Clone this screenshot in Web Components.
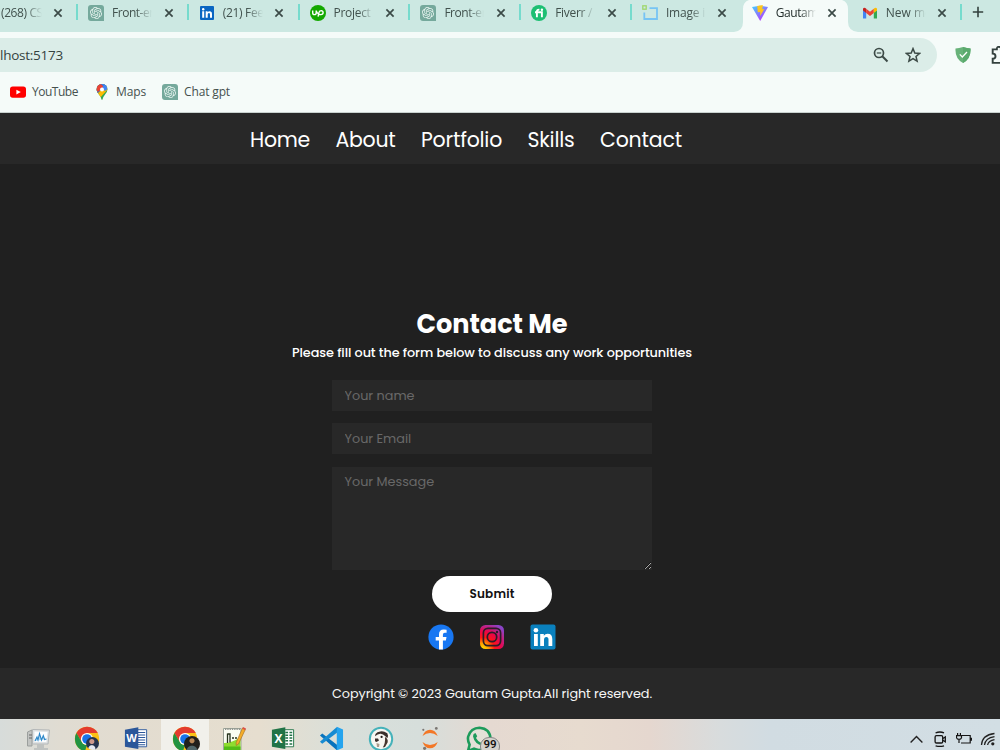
<!DOCTYPE html>
<html lang="en">
<head>
<meta charset="utf-8">
<title>Gautam Gupta</title>
<style>
    html, body {
        margin: 0;
        height: 100%;
        overflow: hidden;
        background: #202020;
    }
</style>
</head>
<body>
<app-desktop></app-desktop>

<script>
const chromeFont = '"Segoe UI", "Open Sans", "Noto Sans", sans-serif';
const pageFont = 'Poppins, Inter, "Open Sans", sans-serif';

const gptKnot = '<path transform="translate(2 2) scale(.5)" fill="#e9f5f1" d="M22.2819 9.8211a5.9847 5.9847 0 0 0-.5157-4.9108 6.0462 6.0462 0 0 0-6.5098-2.9A6.0651 6.0651 0 0 0 4.9807 4.1818a5.9847 5.9847 0 0 0-3.9977 2.9 6.0462 6.0462 0 0 0 .7427 7.0966 5.98 5.98 0 0 0 .511 4.9107 6.051 6.051 0 0 0 6.5146 2.9001A5.9847 5.9847 0 0 0 13.2599 24a6.0557 6.0557 0 0 0 5.7718-4.2058 5.9894 5.9894 0 0 0 3.9977-2.9001 6.0557 6.0557 0 0 0-.7475-7.0729zm-9.022 12.6081a4.4755 4.4755 0 0 1-2.8764-1.0408l.1419-.0804 4.7783-2.7582a.7948.7948 0 0 0 .3927-.6813v-6.7369l2.02 1.1686a.071.071 0 0 1 .038.052v5.5826a4.504 4.504 0 0 1-4.4945 4.4944zm-9.6607-4.1254a4.4708 4.4708 0 0 1-.5346-3.0137l.142.0852 4.783 2.7582a.7712.7712 0 0 0 .7806 0l5.8428-3.3685v2.3324a.0804.0804 0 0 1-.0332.0615L9.74 19.9502a4.4992 4.4992 0 0 1-6.1408-1.6464zM2.3408 7.8956a4.485 4.485 0 0 1 2.3655-1.9728V11.6a.7664.7664 0 0 0 .3879.6765l5.8144 3.3543-2.0201 1.1685a.0757.0757 0 0 1-.071 0l-4.8303-2.7865A4.504 4.504 0 0 1 2.3408 7.872zm16.5963 3.8558L13.1038 8.364 15.1192 7.2a.0757.0757 0 0 1 .071 0l4.8303 2.7913a4.4944 4.4944 0 0 1-.6765 8.1042v-5.6772a.79.79 0 0 0-.407-.667zm2.0107-3.0231l-.142-.0852-4.7735-2.7818a.7759.7759 0 0 0-.7854 0L9.409 9.2297V6.8974a.0662.0662 0 0 1 .0284-.0615l4.8303-2.7866a4.4992 4.4992 0 0 1 6.6802 4.66zM8.3065 12.863l-2.02-1.1638a.0804.0804 0 0 1-.038-.0567V6.0742a4.4992 4.4992 0 0 1 7.3757-3.4537l-.142.0805L8.704 5.459a.7948.7948 0 0 0-.3927.6813zm1.0976-2.3654l2.602-1.4998 2.6069 1.4998v2.9994l-2.5974 1.4997-2.6067-1.4997Z"/>';

// name: [viewBox, markup]
const icons = {
    close: ['0 0 10 10', '<path d="M1.4 1.4L8.6 8.6M8.6 1.4L1.4 8.6" stroke="#3b4a47" stroke-width="1.7"/>'],
    plus: ['0 0 12 12', '<path d="M6 .8V11.2M.8 6H11.2" stroke="#33413e" stroke-width="1.6"/>'],
    gpt: ['0 0 16 16', `<path d="M3 0H13Q16 0 16 3V16H3Q0 16 0 13V3Q0 0 3 0Z" fill="#75a99c"/>${gptKnot}`],
    linkedin: ['0 0 16 16', '<rect x="1" y="1" width="14" height="14" rx="1" fill="#0a66c2"/><path fill="#fff" d="M3.2 6.3h2v6.4h-2zM6.7 6.3h1.9v.9q.7-1 2-1 2.4 0 2.4 2.8v3.7h-2V9.4q0-1.4-1.1-1.4-1.2 0-1.2 1.5v3.2h-2z"/><circle cx="4.2" cy="4.3" r="1.2" fill="#fff"/>'],
    upwork: ['0 0 16 16', '<circle cx="8" cy="8" r="8" fill="#14a800"/><path d="M2.7 5.6V7.7Q2.7 9.6 4.4 9.6Q6.2 9.6 6.2 7.7V5.6Q7.4 9.6 10.9 9.6Q13.1 9.5 13.1 7.6Q13.1 5.7 11.1 5.6Q9.2 5.7 8.8 8L8.1 11.6" fill="none" stroke="#fff" stroke-width="1.4"/>'],
    fiverr: ['0 0 16 16', '<circle cx="8" cy="8" r="8" fill="#1dbf73"/><path d="M4 7.3H10.9V12.2M5.9 12.2V6.4Q5.9 4.5 8.4 4.7" fill="none" stroke="#fff" stroke-width="1.9"/><circle cx="10.9" cy="4.7" r="1.2" fill="#fff"/>'],
    crop: ['0 0 16 16', '<path d="M7.5 3.2H15V14H2.3V7.5" fill="none" stroke="#77c4f4" stroke-width="1.8"/><rect x=".8" y=".8" width="3.4" height="3.4" fill="none" stroke="#9ed66c" stroke-width="1.3"/>'],
    vite: ['0 0 16 16', '<defs><linearGradient id="va" x1="0" y1="0" x2=".7" y2="1"><stop stop-color="#41d1ff"/><stop offset="1" stop-color="#bd34fe"/></linearGradient></defs><path d="M0 2L8 .8L16 2L8.2 16Z" fill="url(#va)"/><path d="M5.2 1L10.8 0L10.3 4.2L12.4 4L8 11L8.3 7L5.8 7.3Z" fill="#ffc61c"/>'],
    gmail: ['0 0 16 16', '<path d="M1 13.6V5L4.2 7.3V13.6Z" fill="#4285f4"/><path d="M15 13.6V5L11.8 7.3V13.6Z" fill="#34a853"/><path d="M4.2 3.8L8 6.8L11.8 3.8V8L8 10.9L4.2 8Z" fill="#ea4335"/><path d="M1 3.8Q1.8 2 3.3 3L4.2 3.8V8L1 5.6Z" fill="#c5221f"/><path d="M15 3.8Q14.2 2 12.7 3L11.8 3.8V8L15 5.6Z" fill="#fbbc04"/>'],
    zoomout: ['0 0 16 16', '<g fill="none" stroke="#3c4a46"><circle cx="6" cy="6" r="4.5" stroke-width="1.7"/><path d="M9.3 9.3L14.5 14.5" stroke-width="2"/><path d="M3.8 6H8.2" stroke-width="1.2"/></g>'],
    star: ['0 0 16 16', '<path d="M8 1.6L9.8 6L14.6 6.4L11 9.5L12.1 14.2L8 11.7L3.9 14.2L5 9.5L1.4 6.4L6.2 6Z" fill="none" stroke="#3c4a46" stroke-width="1.5"/>'],
    shield: ['0 0 16 16', '<path d="M8 0Q12 1.2 15.5 1.4Q16.2 11.5 8 16Q-.2 11.5 .5 1.4Q4 1.2 8 0Z" fill="#67b279"/><path d="M8 0Q12 1.2 15.5 1.4Q16.2 11.5 8 16Z" fill="#5aaa6d"/><path d="M4.8 7.4L7.3 10L12 5" fill="none" stroke="#fff" stroke-width="1.3"/>'],
    puzzle: ['0 0 16 16', '<path d="M1.5 3H5.2Q5 .8 7 .8Q9 .8 8.8 3H13V7Q15.4 7 15.4 9Q15.4 11 13 11V15H1.5V11.3Q4 11.2 4 9Q4 6.8 1.5 6.8Z" fill="none" stroke="#33413e" stroke-width="1.7"/>'],
    youtube: ['0 0 16 16', '<rect y="2.4" width="16" height="11.4" rx="2.7" fill="#f00"/><path d="M6.4 5.7L10.8 8.1L6.4 10.5Z" fill="#fff"/>'],
    maps: ['0 0 16 16', '<defs><clipPath id="pin"><path d="M8 0Q13.4 .3 13.4 5.7Q13.4 8.4 10.7 11Q9 12.9 8.6 15.2Q8 16.6 7.4 15.2Q7 12.9 5.3 11Q2.6 8.4 2.6 5.7Q2.8 .3 8 0Z"/></clipPath></defs><g clip-path="url(#pin)"><path d="M0 0H16V16H0Z" fill="#34a853"/><path d="M0 0H16V3L4 16L0 9Z" fill="#fbbc04"/><path d="M0 0H16L9 4L3 10L0 8Z" fill="#1a73e8"/><path d="M0 0H7L10 3L4 8L0 4Z" fill="#ea4335"/><path d="M7.5 0L16 0V3.5L11 7L8 4L9.7 1.7Z" fill="#4285f4"/></g><circle cx="8" cy="5.6" r="2" fill="#fff"/>'],
    facebook: ['0 0 26 26', '<circle cx="13" cy="13" r="12.6" fill="#1877f2"/><path d="M11 25.5V16.5H7.7V13H11V10.2Q11 5.4 15.8 5.4Q17.3 5.4 18.6 5.7V8.8H16.8Q14.9 8.8 14.9 10.7V13H18.5L17.9 16.5H14.9V25.5Z" fill="#fff"/>'],
    instagram: ['0 0 26 26', '<defs><radialGradient id="ig" cx=".12" cy="1" r="1.15"><stop stop-color="#ffe000"/><stop offset=".2" stop-color="#ffa000"/><stop offset=".42" stop-color="#ff1515"/><stop offset=".66" stop-color="#e8054c"/><stop offset="1" stop-color="#8b44c8"/></radialGradient></defs><rect x="1" y="1" width="24" height="24" rx="5.5" fill="url(#ig)"/><g fill="none" stroke="#2b1d28" stroke-width="1.7"><rect x="4.4" y="4.4" width="17.2" height="17.2" rx="4.5"/><circle cx="13" cy="13" r="4.7"/></g><circle cx="18" cy="8" r="1.2" fill="#2b1d28"/>'],
    linkedinBig: ['0 0 26 26', '<rect x=".5" y=".5" width="25" height="25" rx="2" fill="#0a80bd"/><path fill="#fff" d="M4 10h3.8v12H4zM10.2 10h3.6v1.7q1.3-2 3.8-2 4.7 0 4.7 5.3v7h-3.8v-6.2q0-2.8-2.1-2.8-2.4 0-2.4 3v6h-3.8z"/><circle cx="5.9" cy="6.2" r="2.3" fill="#fff"/>'],
    monitor: ['0 0 26 26', '<path d="M2.5 6L7 4V20H2.5Z" fill="#c2c4c2" stroke="#9b9f9d"/><path d="M4 9H7M4 12H7" stroke="#666"/><path d="M7.5 3.5L24.5 4L23 18H7.5Z" fill="#dfe2e3" stroke="#b2b6b7"/><path d="M9.5 5.5L22.5 6L21.3 16H9.5Z" fill="#fbfdff"/><path d="M10 15L12 11L13 14L14.5 7.5L16.5 14L18.3 9.5L19.6 13.5L21.5 13" fill="#b9dcf2" stroke="#2b86c8" stroke-width="1.1"/><path d="M12 18H19V22H23V24H9V22H12Z" fill="#bfc2c0"/>'],
    chrome: ['0 0 26 26', '<circle cx="13" cy="13" r="12.2" fill="#fbc116"/><path d="M13 13L7.7 16L2.4 7Q6 1 13 .8Q20.5 1 23.8 7H13Z" fill="#e33b2e"/><path d="M2.4 7L7.8 16Q9.6 19 13 19L11 25.1Q4 24 1.5 17Q.1 11 2.4 7Z" fill="#229342"/><circle cx="13" cy="13" r="6.1" fill="#fff"/><circle cx="13" cy="13" r="4.8" fill="#1a73e8"/>'],
    word: ['0 0 26 26', '<path d="M13 4H24.5V22.5H13Z" fill="#fff" stroke="#2b579a"/><path d="M15 7H23M15 9.7H23M15 12.4H23M15 15.1H23M15 17.8H23M15 20.3H23" stroke="#2b579a" stroke-width="1.2"/><path d="M1 4L15.5 1.4V25L1 22.5Z" fill="#2b579a"/><text x="8.2" y="17.6" text-anchor="middle" font-size="12" font-weight="700" font-family="Open Sans, sans-serif" fill="#fff">W</text>'],
    notes: ['0 0 26 26', '<path d="M2.5 2.5H20V26H2.5Z" fill="#fafdf2" stroke="#9da49a"/><path d="M3 17Q11 17 19.5 11V26H3Z" fill="#8fdc2f"/><path d="M3 20.5H19.5V26H3Z" fill="#53bd18"/><path d="M4 3.3H20" stroke="#777" stroke-dasharray="1.3 1"/><path d="M6.5 7.5V17M6.5 8H9V16.5M11 12H13M14 12H16" fill="none" stroke="#26331c" stroke-width="1.3"/><path d="M21.5 2L24.3 3.5L17.5 18L15.2 19.5L15.2 16.5Z" fill="#f5ad28" stroke="#9c6a26" stroke-width=".6"/><path d="M22 1L25 2.6L24.3 4.3L21.3 2.7Z" fill="#db5148"/>'],
    excel: ['0 0 26 26', '<path d="M13 4H24.5V22.5H13Z" fill="#fff" stroke="#217346"/><path d="M15.5 7H18.5M20 7H23M15.5 10H18.5M20 10H23M15.5 13H18.5M20 13H23M15.5 16H18.5M20 16H23M15.5 19.5H18.5M20 19.5H23" stroke="#217346" stroke-width="1.8"/><path d="M1 4L15.5 1.4V25L1 22.5Z" fill="#217346"/><text x="8" y="18" text-anchor="middle" font-size="13" font-weight="700" font-family="Open Sans, sans-serif" fill="#fff">X</text>'],
    vscode: ['0 0 26 26', '<path d="M1 9.8L3.4 7.8L19 19.7V25.5Q18.4 25 17.7 24.5L1 9.8Z" fill="#0873bd"/><path d="M1 16.4L17.7 1.7L19 1V6.8L3.4 18.5L1 16.4Z" fill="#168bd2"/><path d="M18.5 .8L25 3.7V22.5L18.5 25.4Z" fill="#25a4ee"/>'],
    beaver: ['0 0 26 26', '<circle cx="13" cy="13" r="11.2" fill="#f7f6f1" stroke="#45b2ba" stroke-width="2"/><path d="M7.5 8Q9 5.5 12.3 5.5Q15.5 4.8 19.3 7.2Q20.6 9.2 19.3 12.2L17.4 10.2Q15 7.6 12.4 7.7Q9.8 7.6 7 10.2Z" fill="#3a2f2b"/><path d="M17 11Q20.5 13 19.6 16.5L17 21L14.8 21.6Q17.6 17 17 11Z" fill="#44352e"/><path d="M7 12.5L10 12.6L11 14.6L8.5 16L7 15.2Z" fill="#3a2f2b"/><path d="M8.5 17L11.5 18L11 21H9Z" fill="#a99b8c"/><circle cx="13.6" cy="10.9" r="1.1" fill="#241d1b"/>'],
    jupyter: ['0 0 26 26', '<path d="M5.5 10Q8 3.8 13 3.8Q18.3 3.8 20.7 10Q17 6.9 13 6.9Q9 6.9 5.5 10ZM5.5 16Q8 22.3 13 22.3Q18.3 22.3 20.7 16Q17 19 13 19Q9 19 5.5 16Z" fill="#f37726"/><circle cx="6.3" cy="3.8" r="1.1" fill="#7b7773"/><circle cx="19.3" cy="2.4" r="1.4" fill="#7b7773"/><circle cx="7.6" cy="22.3" r="1.6" fill="#7b7773"/>'],
    whatsapp: ['0 0 26 26', '<path d="M2 25L3.6 18.7Q1.3 14.5 2.2 10.5Q4.8 1.8 13.5 1.7Q24 2.5 24.6 13Q24 23.6 13 24Q10.5 24 8 22.7Z" fill="#e3e1d7" stroke="#1d9b5b" stroke-width="2.6"/><path d="M9.5 7L11.2 10.3L10 12Q11.8 15.5 15.3 17L17 15.3L20 17Q19.3 20 16.5 19.7Q8.5 18 7 10.2Q7 7.5 9.5 7Z" fill="#1d9b5b"/>'],
    chevron: ['0 0 14 14', '<path d="M1.5 9.8L7 4.3L12.5 9.8" fill="none" stroke="#222" stroke-width="1.3"/>'],
    camera: ['0 0 16 16', '<g fill="none" stroke="#151515" stroke-width="1.3"><rect x="3.1" y="4.6" width="7.6" height="7.4" rx="1.3"/><path d="M10.8 7.5L13.3 6V10.8L10.8 9.3M3.6 1.8Q8 .2 12 1.8M3.6 14.8Q8 16.2 12 14.8"/></g>'],
    battery: ['0 0 16 16', '<g fill="none" stroke="#151515" stroke-width="1.2"><path d="M6 4.5H14.2V12H5M15.4 6.7V9.7M1.6 2V4.5M4.4 2V4.5M.5 4.6H5.5V6.7Q5 8.3 3 8.4Q1 8.3.5 6.7ZM3 8.4V12"/></g>'],
    wifi: ['0 0 16 16', '<g fill="none" stroke="#222" stroke-width="1.3"><path d="M1.5 14Q2 4 14.5 2.5"/><path d="M4.5 14Q5.3 7 14.5 5.6"/><path d="M7.6 14Q8.4 9.7 14.5 8.7"/></g><circle cx="12.8" cy="12.8" r="1.6" fill="#222"/>']
};

class AppIcon extends HTMLElement {
    constructor() {
        super();
        this.attachShadow({ mode: 'open' });
    }

    connectedCallback() {
        const size = this.getAttribute('size') || 16;
        const [viewBox, markup] = icons[this.getAttribute('name')];
        this.shadowRoot.innerHTML = `
            <style>
                :host { display: block; flex: none; width: ${size}px; height: ${size}px; }
                svg { display: block; }
            </style>
            <svg width="${size}" height="${size}" viewBox="${viewBox}">${markup}</svg>
        `;
    }
}

// Spaces its letters so that the line is as wide as the width attribute.
class FitText extends HTMLElement {
    constructor() {
        super();
        this.attachShadow({ mode: 'open' });
        this.shadowRoot.innerHTML = `
            <style>
                :host { display: block; flex: none; white-space: nowrap; }
                span { display: inline-block; }
            </style>
            <span><slot></slot></span>
        `;
    }

    connectedCallback() {
        const width = Number(this.getAttribute('width'));
        const span = this.shadowRoot.querySelector('span');
        this.style.width = width + 'px';
        const natural = span.getBoundingClientRect().width;
        const spacing = (width - natural) / this.textContent.length;
        span.style.letterSpacing = spacing.toFixed(3) + 'px';
    }
}

class BrowserTab extends HTMLElement {
    constructor() {
        super();
        this.attachShadow({ mode: 'open' });
    }

    connectedCallback() {
        const icon = this.getAttribute('icon');
        this.shadowRoot.innerHTML = `
            <style>
                :host {
                    display: flex;
                    flex: none;
                    align-items: center;
                    box-sizing: border-box;
                    width: 110.8px;
                    height: 31px;
                    padding: 0 0 6px 12px;
                    background: linear-gradient(#76dbcd, #76dbcd) 0 4px / 2px 16px no-repeat;
                    color: #41514d;
                }
                :host([first]) { width: 76px; padding-left: 1px; background: none; }
                :host([plain]) { width: 108px; padding-left: 10px; background: none; }
                :host([active]) {
                    width: 111px;
                    padding-left: 11px;
                    color: #1f2a28;
                    background: none;
                }
                .title {
                    flex: none;
                    width: 40px;
                    margin-left: 8px;
                    overflow: hidden;
                    mask-image: linear-gradient(90deg, #000 60%, transparent);
                }
                :host([first]) .title { margin-left: 0; width: 41px; }
                app-icon.close { margin-left: 11.5px; }
                :host([first]) .close, :host([plain]) .close, :host([active]) .close { margin-left: 11px; }
                .shape { position: absolute; top: 0; left: 734px; z-index: -1; }
            </style>
            ${this.hasAttribute('active') ? '<svg class="shape" width="124" height="32"><path d="M0 32Q9 31 9 22V9Q9 2 15 0H108Q114 2 114 9V22Q114 31 124 32Z" fill="#f5fbf9"/></svg>' : ''}
            ${icon ? `<app-icon name="${icon}"></app-icon>` : ''}
            <div class="title"><slot></slot></div>
            <app-icon class="close" name="close" size="10"></app-icon>
        `;
    }
}

class BrowserChrome extends HTMLElement {
    constructor() {
        super();
        this.attachShadow({ mode: 'open' });
        this.shadowRoot.innerHTML = `
            <style>
                :host {
                    display: block;
                    position: relative;
                    z-index: 0;
                    box-sizing: border-box;
                    height: 113px;
                    overflow: hidden;
                    background: #f5fbf9;
                    border-bottom: 1px solid #c9d2cf;
                    font: 12px/16px ${chromeFont};
                }
                .tabs { display: flex; height: 32px; position: relative; z-index: 0; background: #cce8e2; }
                .new {
                    padding: 6px 0 0 12px;
                    background: linear-gradient(#76dbcd, #76dbcd) 0 4px / 2px 16px no-repeat;
                }
                .toolbar { display: flex; align-items: center; height: 34px; margin-top: 6px; }
                .address {
                    display: flex;
                    flex: none;
                    align-items: center;
                    box-sizing: border-box;
                    width: 937px;
                    height: 34px;
                    padding-right: 16px;
                    gap: 16px;
                    border-radius: 0 17px 17px 0;
                    background: #dbede8;
                    font-size: 13.5px;
                    color: #35423f;
                }
                .address fit-text { margin-right: auto; }
                .shield { margin: 0 20px 0 18px; }
                .bookmarks { display: flex; align-items: center; height: 40px; padding-left: 10px; color: #45514f; }
                .bookmarks app-icon { margin-right: 6px; }
                .bookmarks fit-text { margin-right: 16px; }
            </style>
            <div class="tabs">
                <browser-tab first><fit-text width="48">(268) CSS</fit-text></browser-tab>
                <browser-tab icon="gpt"><fit-text width="51">Front-end</fit-text></browser-tab>
                <browser-tab icon="linkedin"><fit-text width="48">(21) Feed</fit-text></browser-tab>
                <browser-tab icon="upwork"><fit-text width="37">Project</fit-text></browser-tab>
                <browser-tab icon="gpt"><fit-text width="51">Front-end</fit-text></browser-tab>
                <browser-tab icon="fiverr"><fit-text width="37">Fiverr /</fit-text></browser-tab>
                <browser-tab icon="crop"><fit-text width="39">Image i</fit-text></browser-tab>
                <browser-tab icon="vite" active><fit-text width="42">Gautam</fit-text></browser-tab>
                <browser-tab icon="gmail" plain><fit-text width="46">New me</fit-text></browser-tab>
                <div class="new"><app-icon name="plus" size="12"></app-icon></div>
            </div>
            <div class="toolbar">
                <div class="address">
                    <fit-text width="63">lhost:5173</fit-text>
                    <app-icon name="zoomout"></app-icon>
                    <app-icon name="star"></app-icon>
                </div>
                <app-icon class="shield" name="shield"></app-icon>
                <app-icon name="puzzle" size="18"></app-icon>
            </div>
            <div class="bookmarks">
                <app-icon name="youtube"></app-icon><fit-text width="46">YouTube</fit-text>
                <app-icon name="maps"></app-icon><fit-text width="30">Maps</fit-text>
                <app-icon name="gpt"></app-icon><fit-text width="46">Chat gpt</fit-text>
            </div>
        `;
    }
}

class SiteNav extends HTMLElement {
    constructor() {
        super();
        this.attachShadow({ mode: 'open' });
        this.shadowRoot.innerHTML = `
            <style>
                :host {
                    display: flex;
                    align-items: center;
                    box-sizing: border-box;
                    gap: 25.5px;
                    height: 51px;
                    padding: 2px 0 0 250px;
                    background: #282828;
                    color: #fff;
                    font: 20.48px/30px ${pageFont};
                }
            </style>
            <fit-text width="60">Home</fit-text>
            <fit-text width="60">About</fit-text>
            <fit-text width="81">Portfolio</fit-text>
            <fit-text width="47">Skills</fit-text>
            <fit-text width="82">Contact</fit-text>
        `;
    }
}

class ContactForm extends HTMLElement {
    constructor() {
        super();
        this.attachShadow({ mode: 'open' });
        this.shadowRoot.innerHTML = `
            <style>
                :host {
                    display: flex;
                    flex-direction: column;
                    align-items: center;
                    box-sizing: border-box;
                    width: 984px;
                    height: 504px;
                    padding-top: 142px;
                    color: #fff;
                    font: 500 12.8px/20px ${pageFont};
                }
                h1 { margin: 0; font-size: 25.6px; line-height: 37px; font-weight: 700; }
                p { margin: 0 0 17px; }
                form { display: flex; flex-direction: column; align-items: center; }
                input, textarea {
                    display: block;
                    box-sizing: border-box;
                    width: 320px;
                    height: 31px;
                    margin: 0 0 12px;
                    padding: 5px 12.5px;
                    border: 0;
                    border-radius: 0;
                    outline: 0;
                    background: #282828;
                    color: #fff;
                    color-scheme: dark;
                    font: 400 12.8px/20px ${pageFont};
                }
                textarea { height: 103px; margin: 1px 0 6px; }
                ::placeholder { color: #686868; }
                button {
                    display: flex;
                    align-items: center;
                    justify-content: center;
                    width: 120px;
                    height: 36px;
                    padding: 0;
                    border: 0;
                    border-radius: 18px;
                    background: #fff;
                    color: #111;
                    font: 600 12px/20px ${pageFont};
                }
                .social { display: flex; gap: 25px; margin-top: 12px; }
            </style>
            <h1><fit-text width="151">Contact Me</fit-text></h1>
            <p><fit-text width="400">Please fill out the form below to discuss any work opportunities</fit-text></p>
            <form>
                <input type="text" placeholder="Your name">
                <input type="email" placeholder="Your Email">
                <textarea placeholder="Your Message"></textarea>
                <button type="button"><fit-text width="45">Submit</fit-text></button>
            </form>
            <div class="social">
                <app-icon name="facebook" size="26"></app-icon>
                <app-icon name="instagram" size="26"></app-icon>
                <app-icon name="linkedinBig" size="26"></app-icon>
            </div>
        `;
    }
}

class SiteFooter extends HTMLElement {
    constructor() {
        super();
        this.attachShadow({ mode: 'open' });
        this.shadowRoot.innerHTML = `
            <style>
                :host {
                    display: flex;
                    align-items: center;
                    justify-content: center;
                    box-sizing: border-box;
                    height: 51px;
                    padding-right: 16px;
                    background: #282828;
                    color: #f6f6f6;
                    font: 12.8px/20px ${pageFont};
                }
            </style>
            <fit-text width="320"></fit-text>
        `;
    }

    connectedCallback() {
        const line = this.shadowRoot.querySelector('fit-text');
        line.textContent = this.textContent;
        line.connectedCallback();
    }
}

class TaskBar extends HTMLElement {
    constructor() {
        super();
        this.attachShadow({ mode: 'open' });
        this.shadowRoot.innerHTML = `
            <style>
                :host {
                    display: flex;
                    box-sizing: border-box;
                    height: 31px;
                    padding-left: 13px;
                    overflow: hidden;
                    background: linear-gradient(90deg, #d7dcda 0, #e0dcd2 60px, #e2dcd0 120px, #e6decf 260px, #d8dfda 350px, #d6dedb 420px, #e5d9d1 490px, #e7dbcf 580px, #e5d7cf 650px, #d8dcdd 720px, #d1dce2 770px, #d2dee4 1000px);
                }
                .app {
                    display: flex;
                    flex: none;
                    justify-content: center;
                    position: relative;
                    width: 49px;
                    height: 31px;
                    padding-top: 7px;
                    box-sizing: border-box;
                }
                .active { background: linear-gradient(#f1f0eb, #f1f0eb) 1px 0 / 48px 31px no-repeat; }
                .face {
                    position: absolute;
                    left: 24px;
                    top: 18px;
                    width: 13px;
                    height: 13px;
                    border-radius: 50%;
                    background: radial-gradient(circle at 45% 35%, #cf9a8c 0 2px, transparent 3px), radial-gradient(circle at 45% 90%, #e6e9f2 0 3px, transparent 4px), #27344e;
                }
                .active .face {
                    width: 16px;
                    height: 16px;
                    top: 17px;
                    background: radial-gradient(circle at 50% 30%, #b98757 0 2px, transparent 3px), radial-gradient(circle at 50% 95%, #51666a 0 5px, transparent 6px), #211f1c;
                }
                .badge {
                    position: absolute;
                    left: 26px;
                    top: 18px;
                    width: 18px;
                    height: 17px;
                    border: 1px solid #888;
                    border-radius: 9px;
                    background: #d5d2cc;
                    color: #111;
                    font: 600 11.5px/12px Roboto, ${chromeFont};
                    text-align: center;
                }
                .tray { display: flex; gap: 8px; margin: 12px 4px 0 auto; }
                .tray app-icon:first-child { margin-top: 1px; }
            </style>
            <div class="app"><app-icon name="monitor" size="26"></app-icon></div>
            <div class="app"><app-icon name="chrome" size="26"></app-icon><div class="face"></div></div>
            <div class="app"><app-icon name="word" size="24"></app-icon></div>
            <div class="app active"><app-icon name="chrome" size="26"></app-icon><div class="face"></div></div>
            <div class="app"><app-icon name="notes" size="26"></app-icon></div>
            <div class="app"><app-icon name="excel" size="24"></app-icon></div>
            <div class="app"><app-icon name="vscode" size="25"></app-icon></div>
            <div class="app"><app-icon name="beaver" size="26"></app-icon></div>
            <div class="app"><app-icon name="jupyter" size="26"></app-icon></div>
            <div class="app"><app-icon name="whatsapp" size="26"></app-icon><div class="badge">99</div></div>
            <div class="tray">
                <app-icon name="chevron" size="15"></app-icon>
                <app-icon name="camera"></app-icon>
                <app-icon name="battery"></app-icon>
                <app-icon name="wifi"></app-icon>
            </div>
        `;
    }
}

class AppDesktop extends HTMLElement {
    constructor() {
        super();
        this.attachShadow({ mode: 'open' });
        this.shadowRoot.innerHTML = `
            <style>
                :host {
                    display: block;
                    width: 1000px;
                    height: 750px;
                    overflow: hidden;
                    background: #202020;
                }
            </style>
            <browser-chrome></browser-chrome>
            <site-nav></site-nav>
            <contact-form></contact-form>
            <site-footer>Copyright © 2023 Gautam Gupta.All right reserved.</site-footer>
            <task-bar></task-bar>
        `;
    }
}

customElements.define('app-icon', AppIcon);
customElements.define('fit-text', FitText);
customElements.define('browser-tab', BrowserTab);
customElements.define('browser-chrome', BrowserChrome);
customElements.define('site-nav', SiteNav);
customElements.define('contact-form', ContactForm);
customElements.define('site-footer', SiteFooter);
customElements.define('task-bar', TaskBar);
customElements.define('app-desktop', AppDesktop);
</script>
</body>
</html>
